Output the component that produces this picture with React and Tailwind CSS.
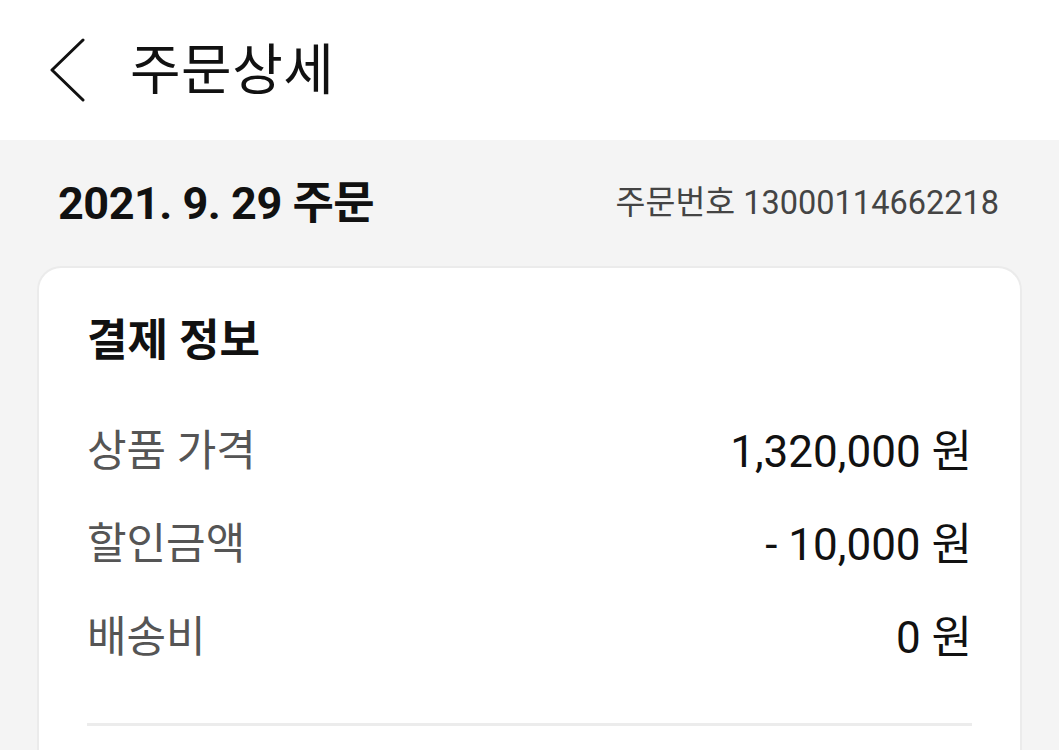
export default function App() {
  const rows = [
    { label: "상품 가격", value: "1,320,000 원" },
    { label: "할인금액", value: "- 10,000 원" },
    { label: "배송비", value: "0 원" },
  ];
  return (
    <div
      className="w-[1059px] h-[750px] overflow-hidden bg-[#f4f4f4]"
      style={{ fontFamily: 'Roboto, "Noto Sans CJK KR", sans-serif' }}
    >
      <header className="h-[140px] bg-white flex items-center pl-[49px]">
        <svg width="38" height="64" viewBox="0 0 38 64" className="shrink-0">
          <polyline
            points="34,2 3,32 34,62"
            fill="none"
            stroke="#111"
            strokeWidth="3"
            strokeLinecap="round"
            strokeLinejoin="round"
          />
        </svg>
        <h1 className="ml-[43px] text-[55px] leading-none font-normal text-[#111] tracking-[0.5px]">
          주문상세
        </h1>
      </header>

      <div className="h-[126px] flex items-center justify-between pl-[58px] pr-[60px]">
        <div className="text-[45px] font-bold text-[#111] leading-none tracking-[-0.5px]">
          2021. 9. 29 주문
        </div>
        <div className="text-[32.5px] text-[#444] leading-none">
          주문번호 13000114662218
        </div>
      </div>

      <div className="mx-[37px] bg-white rounded-t-[24px] border-2 border-[#ebebeb] border-b-0 pt-[49px] px-[48px] h-[490px]">
        <div className="h-[48px] flex items-center text-[44px] font-bold text-[#111] leading-none">
          결제 정보
        </div>
        <div className="mt-[40px]">
          {rows.map((r) => (
            <div key={r.label} className="h-[93px] flex items-center justify-between">
              <span className="text-[43px] text-[#555] leading-none">{r.label}</span>
              <span className="text-[44px] text-[#111] leading-none">{r.value}</span>
            </div>
          ))}
        </div>
        <div className="mt-[39px] h-[3px] bg-[#ececec]" />
      </div>
    </div>
  );
}
